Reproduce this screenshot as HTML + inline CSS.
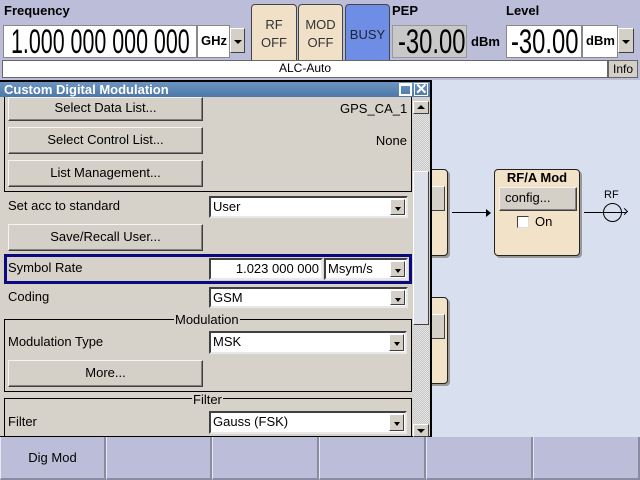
<!DOCTYPE html>
<html><head><style>
*{box-sizing:border-box;margin:0;padding:0}
body{width:640px;height:480px;overflow:hidden;background:#d8dfee;font-family:"Liberation Sans",sans-serif;font-size:13px;color:#000;position:relative}
.a{position:absolute}
.btn{position:absolute;background:#d4d0c8;border:1px solid;border-color:#f4f4f4 #404040 #404040 #f4f4f4;box-shadow:inset -1px -1px 0 #808080;text-align:center;font-size:13px}
.combo{position:absolute;background:#fff;border:2px solid;border-color:#404040 #e8e8e8 #e8e8e8 #404040;font-size:13px;padding-left:2px;line-height:17px}
.dd{position:absolute;right:1px;top:1px;bottom:1px;width:15px;background:#d4d0c8;border:1px solid;border-color:#fff #404040 #404040 #fff}
.dd:after{content:"";position:absolute;left:4px;top:7px;border-left:3px solid transparent;border-right:3px solid transparent;border-top:4px solid #000}
.chk{background-color:#e4e4e4;background-image:linear-gradient(45deg,#c8c8c8 25%,transparent 25%,transparent 75%,#c8c8c8 75%),linear-gradient(45deg,#c8c8c8 25%,transparent 25%,transparent 75%,#c8c8c8 75%);background-size:2px 2px;background-position:0 0,1px 1px}
.grp{position:absolute;border:1px solid #000}
.sk{position:absolute;top:437px;height:43px;background:#bcbdd8;border-right:2px solid #8a8aa0;border-bottom:2px solid #8a8aa0;border-left:1px solid #e8e8f4;text-align:center;line-height:42px;font-size:13px}
.big{font-size:34px;line-height:32px;white-space:nowrap;overflow:hidden;color:#000}
.big span{position:absolute;left:0;top:0;transform-origin:0 0}
</style></head><body>
<div class="a" style="left:0;top:0;width:640px;height:80px;background:#bcbdd8"></div>
<div class="a" style="left:4px;top:3px;font-weight:bold;font-size:13px">Frequency</div>
<div class="a big" style="left:3px;top:25px;width:194px;height:33px;background:#fff;border:1px solid #888"><span style="transform:translateX(7px) scaleX(.63)">1.000 000 000 000</span></div>
<div class="a" style="left:197px;top:25px;width:33px;height:33px;background:#fff;border:1px solid #888;font-weight:bold;font-size:13px;line-height:30px;padding-left:3px">GHz</div>
<div class="a" style="left:230px;top:28px;width:15px;height:25px;background:#d4d0c8;border:1px solid;border-color:#fff #404040 #404040 #fff"><div class="a" style="left:3px;top:11px;border-left:4px solid transparent;border-right:4px solid transparent;border-top:4px solid #000"></div></div>
<div class="a" style="left:251px;top:4px;width:46px;height:62px;background:#f0e0c8;border:1px solid #444;border-radius:4px;text-align:center;line-height:18px;padding-top:11px;color:#333">RF<br>OFF</div>
<div class="a" style="left:298px;top:4px;width:45px;height:62px;background:#f0e0c8;border:1px solid #444;border-radius:4px;text-align:center;line-height:18px;padding-top:11px;color:#333">MOD<br>OFF</div>
<div class="a" style="left:345px;top:4px;width:45px;height:62px;background:#6d8ee4;border:1px solid #444;border-radius:4px;text-align:center;line-height:60px;color:#223">BUSY</div>
<div class="a" style="left:392px;top:3px;font-weight:bold">PEP</div>
<div class="a big" style="left:392px;top:25px;width:75px;height:33px;background:#c8c8c8;border:1px solid #999"><span style="transform:translateX(5px) scaleX(.7)">-30.00</span></div>
<div class="a" style="left:471px;top:34px;font-weight:bold;font-size:13px">dBm</div>
<div class="a" style="left:506px;top:3px;font-weight:bold">Level</div>
<div class="a big" style="left:506px;top:25px;width:76px;height:33px;background:#fff;border:1px solid #888"><span style="transform:translateX(4px) scaleX(.7)">-30.00</span></div>
<div class="a" style="left:582px;top:25px;width:36px;height:33px;background:#fff;border:1px solid #888;font-weight:bold;line-height:30px;padding-left:3px">dBm</div>
<div class="a" style="left:618px;top:28px;width:16px;height:25px;background:#d4d0c8;border:1px solid;border-color:#fff #404040 #404040 #fff"><div class="a" style="left:3px;top:11px;border-left:4px solid transparent;border-right:4px solid transparent;border-top:4px solid #000"></div></div>
<div class="a" style="left:2px;top:60px;width:606px;height:18px;background:#fff;border:1px solid #666;text-align:center;font-size:12px;line-height:15px">ALC-Auto</div>
<div class="a" style="left:608px;top:60px;width:30px;height:18px;background:#d4d0c8;border:1px solid #666;font-size:12px;line-height:16px;text-align:center">Info</div>

<div class="a" style="left:420px;top:169px;width:28px;height:87px;background:#f2e2c8;border:1px solid #222;border-radius:4px;box-shadow:2px 2px 0 #999"></div>
<div class="a" style="left:420px;top:186px;width:25px;height:25px;background:#d4d0c8;border:1px solid;border-color:#fff #404040 #404040 #fff"></div>
<div class="a" style="left:420px;top:297px;width:28px;height:87px;background:#f2e2c8;border:1px solid #222;border-radius:4px;box-shadow:2px 2px 0 #999"></div>
<div class="a" style="left:420px;top:314px;width:25px;height:25px;background:#d4d0c8;border:1px solid;border-color:#fff #404040 #404040 #fff"></div>
<div class="a" style="left:452px;top:212px;width:36px;height:1px;background:#000"></div>
<div class="a" style="left:486px;top:209px;border-top:4px solid transparent;border-bottom:4px solid transparent;border-left:5px solid #000"></div>
<div class="a" style="left:494px;top:169px;width:86px;height:87px;background:#f2e2c8;border:1px solid #222;border-radius:4px;box-shadow:2px 2px 0 #999"></div>
<div class="a" style="left:494px;top:170px;width:86px;text-align:center;font-weight:bold;font-size:13px">RF/A Mod</div>
<div class="btn" style="left:499px;top:187px;width:78px;height:24px;text-align:left;padding-left:5px;line-height:20px">config...</div>
<div class="a" style="left:517px;top:216px;width:12px;height:12px;background:#fff;border:1px solid;border-color:#404040 #ddd #ddd #404040"></div>
<div class="a" style="left:535px;top:214px">On</div>
<div class="a" style="left:584px;top:212px;width:42px;height:1px;background:#000"></div>
<div class="a" style="left:603px;top:203px;width:19px;height:19px;border:1px solid #000;border-radius:50%"></div>
<div class="a" style="left:622px;top:209px;width:5px;height:5px;border-top:1px solid #000;border-right:1px solid #000;transform:rotate(45deg)"></div>
<div class="a" style="left:604px;top:189px;font-size:11px">RF</div>

<div class="a" style="left:0;top:80px;width:432px;height:358px;background:#d6d2ca;border:2px solid #000;border-left:none"></div>
<div class="a" style="left:0;top:82px;width:430px;height:15px;background:linear-gradient(#6c94c0,#4d78a8);color:#fff;font-weight:bold;font-size:13px;line-height:15px;padding-left:4px">Custom Digital Modulation</div>
<div class="a" style="left:399px;top:83px;width:13px;height:13px;border:2px solid #fff;border-top-width:3px"></div>
<div class="a" style="left:414px;top:83px;width:14px;height:13px;color:#fff;font-weight:bold;font-size:15px;line-height:12px;text-align:center;border:1px solid #fff">✕</div>
<div class="grp" style="left:4px;top:97px;width:408px;height:95px;border-top:none"></div>
<div class="btn" style="left:8px;top:97px;width:195px;height:24px;line-height:20px">Select Data List...</div>
<div class="a" style="left:340px;top:101px;width:67px;text-align:right">GPS_CA_1</div>
<div class="btn" style="left:8px;top:127px;width:195px;height:27px;line-height:24px">Select Control List...</div>
<div class="a" style="left:340px;top:133px;width:67px;text-align:right">None</div>
<div class="btn" style="left:8px;top:160px;width:195px;height:27px;line-height:24px">List Management...</div>
<div class="a" style="left:8px;top:198px">Set acc to standard</div>
<div class="combo" style="left:209px;top:196px;width:199px;height:22px">User<div class="dd"></div></div>
<div class="btn" style="left:8px;top:224px;width:195px;height:27px;line-height:24px">Save/Recall User...</div>
<div class="a" style="left:4px;top:254px;width:408px;height:30px;border:3px solid #0a0a80"></div>
<div class="a" style="left:8px;top:260px">Symbol Rate</div>
<div class="combo" style="left:209px;top:258px;width:114px;height:22px;text-align:right;padding-right:2px">1.023 000 000</div>
<div class="combo" style="left:324px;top:258px;width:84px;height:22px">Msym/s<div class="dd"></div></div>
<div class="a" style="left:8px;top:289px">Coding</div>
<div class="combo" style="left:209px;top:287px;width:199px;height:21px">GSM<div class="dd"></div></div>
<div class="grp" style="left:4px;top:319px;width:408px;height:73px"></div>
<div class="a" style="left:174px;top:312px;background:#d6d2ca;padding:0 1px">Modulation</div>
<div class="a" style="left:8px;top:334px">Modulation Type</div>
<div class="combo" style="left:209px;top:331px;width:198px;height:23px">MSK<div class="dd"></div></div>
<div class="btn" style="left:8px;top:360px;width:195px;height:27px;line-height:24px">More...</div>
<div class="grp" style="left:4px;top:398px;width:408px;height:45px;border-bottom:none"></div>
<div class="a" style="left:192px;top:392px;background:#d6d2ca;padding:0 1px">Filter</div>
<div class="a" style="left:8px;top:414px">Filter</div>
<div class="combo" style="left:209px;top:411px;width:198px;height:23px">Gauss (FSK)<div class="dd"></div></div>
<div class="a chk" style="left:413px;top:101px;width:16px;height:336px"></div>
<div class="a" style="left:413px;top:101px;width:16px;height:13px;background:#d4d0c8;border:1px solid;border-color:#fff #404040 #404040 #fff"><div class="a" style="left:3px;top:3px;border-left:4px solid transparent;border-right:4px solid transparent;border-bottom:4px solid #000"></div></div>
<div class="a" style="left:413px;top:171px;width:16px;height:154px;background:#dde0e8;border:1px solid;border-color:#fff #404040 #404040 #fff"></div>
<div class="a" style="left:413px;top:424px;width:16px;height:13px;background:#d4d0c8;border:1px solid;border-color:#fff #404040 #404040 #fff"><div class="a" style="left:3px;top:4px;border-left:4px solid transparent;border-right:4px solid transparent;border-top:4px solid #000"></div></div>

<div class="sk" style="left:0;width:106px">Dig Mod</div>
<div class="sk" style="left:106px;width:106px"></div>
<div class="sk" style="left:212px;width:107px"></div>
<div class="sk" style="left:319px;width:107px"></div>
<div class="sk" style="left:426px;width:107px"></div>
<div class="sk" style="left:533px;width:107px"></div>
</body></html>
